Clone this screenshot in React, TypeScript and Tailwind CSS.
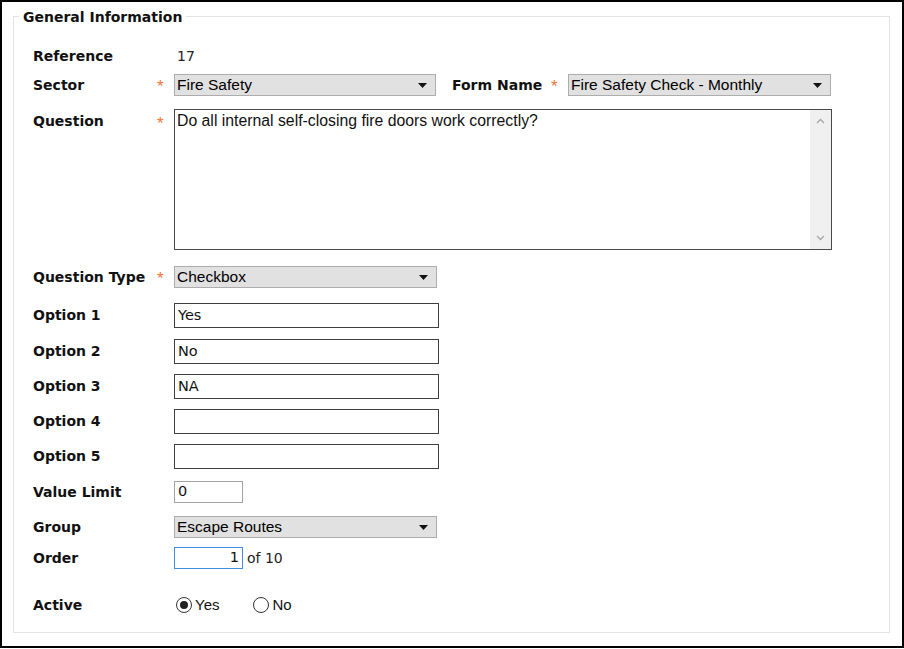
import React from "react";

const labelFont = { fontFamily: '"DejaVu Sans", Verdana, sans-serif' };

function Arrow() {
  return (
    <svg width="9" height="5" viewBox="0 0 9 5" className="shrink-0">
      <path d="M0 0 L9 0 L4.5 5 Z" fill="#111" />
    </svg>
  );
}

function Select({ value, width = "w-[263px]" }: { value: string; width?: string }) {
  return (
    <div
      className={`${width} h-[22px] flex items-center justify-between pl-[2px] pr-[8px] bg-[#e1e1e1] border border-[#adadad] text-[15.5px] text-black font-['Liberation_Sans',Arial,sans-serif]`}
    >
      <span className="leading-none">{value}</span>
      <Arrow />
    </div>
  );
}

function TextBox({ value, width = "w-[265px]", h = "h-[25px]", border = "border-[#3f3f3f]", right = false }: {
  value: string;
  width?: string;
  h?: string;
  border?: string;
  right?: boolean;
}) {
  return (
    <div
      className={`${width} ${h} border ${border} bg-white flex items-center px-[3px] text-[14.5px] text-[#111] ${right ? "justify-end" : ""}`}
      style={labelFont}
    >
      {value}
    </div>
  );
}

function Label({ text, star = false, width = "w-[124px]" }: { text: string; star?: boolean; width?: string }) {
  return (
    <>
      <span className={`${width} shrink-0 text-[14px] font-bold text-[#111] leading-[17px]`} style={labelFont}>
        {text}
      </span>
      <span className="w-[17px] shrink-0 pt-[2px] text-[#f4743b] text-[17px] leading-[17px] font-['Liberation_Sans',Arial,sans-serif]">
        {star ? "*" : ""}
      </span>
    </>
  );
}

function Radio({ checked, label }: { checked: boolean; label: string }) {
  return (
    <span className="flex items-center gap-[3px]">
      <span className="w-[16px] h-[16px] rounded-full border border-[#333] bg-white flex items-center justify-center">
        {checked && <span className="w-[8px] h-[8px] rounded-full bg-[#222]" />}
      </span>
      <span className="text-[15px] text-[#111] font-['Liberation_Sans',Arial,sans-serif]">{label}</span>
    </span>
  );
}

export default function App() {
  const options = [
    { label: "Option 1", value: "Yes", mt: "mt-[15px]" },
    { label: "Option 2", value: "No", mt: "mt-[11px]" },
    { label: "Option 3", value: "NA", mt: "mt-[10px]" },
    { label: "Option 4", value: "", mt: "mt-[10px]" },
    { label: "Option 5", value: "", mt: "mt-[10px]" },
  ];

  return (
    <div className="w-[904px] h-[648px] border-2 border-black bg-white overflow-hidden">
      <div className="relative ml-[11px] mt-[14px] w-[877px] h-[617px] border border-[#e3e3e3]">
        {/* legend */}
        <span
          className="absolute left-[5px] top-[-8px] px-[4px] bg-white text-[14px] font-bold text-[#111] leading-[17px]"
          style={labelFont}
        >
          General Information
        </span>

        <div className="flex flex-col pl-[19px]">
          {/* Reference */}
          <div className="mt-[28px] h-[22px] flex items-center">
            <Label text="Reference" />
            <span className="ml-[3px] text-[14px] text-[#222]" style={labelFont}>17</span>
          </div>

          {/* Sector + Form Name */}
          <div className="mt-[7px] h-[22px] flex items-center">
            <Label text="Sector" star />
            <Select value="Fire Safety" width="w-[262px]" />
            <span className="ml-[16px] flex items-center">
              <Label text="Form Name" star width="w-[99px]" />
            </span>
            <Select value="Fire Safety Check - Monthly" />
          </div>

          {/* Question */}
          <div className="mt-[13px] h-[141px] flex items-start">
            <span className="flex pt-[4px]">
              <Label text="Question" star />
            </span>
            <div className="w-[658px] h-[141px] border border-[#4a4a4a] bg-white flex">
              <div className="flex-1 px-[2px] pt-[2px] text-[15.8px] leading-[18px] text-[#111] font-['Liberation_Sans',Arial,sans-serif]">
                Do all internal self-closing fire doors work correctly?
              </div>
              <div className="w-[21px] bg-[#f0f0f0] flex flex-col justify-between items-center py-[8px]">
                <svg width="9" height="6" viewBox="0 0 9 6">
                  <path d="M1 5 L4.5 1.5 L8 5" fill="none" stroke="#a6a6a6" strokeWidth="1.3" />
                </svg>
                <svg width="9" height="6" viewBox="0 0 9 6">
                  <path d="M1 1 L4.5 4.5 L8 1" fill="none" stroke="#a6a6a6" strokeWidth="1.3" />
                </svg>
              </div>
            </div>
          </div>

          {/* Question Type */}
          <div className="mt-[16px] h-[22px] flex items-center">
            <Label text="Question Type" star />
            <Select value="Checkbox" />
          </div>

          {options.map((o) => (
            <div key={o.label} className={`${o.mt} h-[25px] flex items-center`}>
              <Label text={o.label} />
              <TextBox value={o.value} />
            </div>
          ))}

          {/* Value Limit */}
          <div className="mt-[12px] h-[22px] flex items-center">
            <Label text="Value Limit" />
            <TextBox value="0" width="w-[69px]" h="h-[22px]" border="border-[#a3a3a3]" />
          </div>

          {/* Group */}
          <div className="mt-[13px] h-[22px] flex items-center">
            <Label text="Group" />
            <Select value="Escape Routes" />
          </div>

          {/* Order */}
          <div className="mt-[9px] h-[22px] flex items-center">
            <Label text="Order" />
            <TextBox value="1" width="w-[69px]" h="h-[22px]" border="border-[#3d8ee0]" right />
            <span className="ml-[4px] text-[14px] text-[#222]" style={labelFont}>of 10</span>
          </div>

          {/* Active */}
          <div className="mt-[27px] h-[18px] flex items-center">
            <Label text="Active" />
            <span className="ml-[2px] flex items-center gap-[34px]">
              <Radio checked label="Yes" />
              <Radio checked={false} label="No" />
            </span>
          </div>
        </div>
      </div>
    </div>
  );
}
